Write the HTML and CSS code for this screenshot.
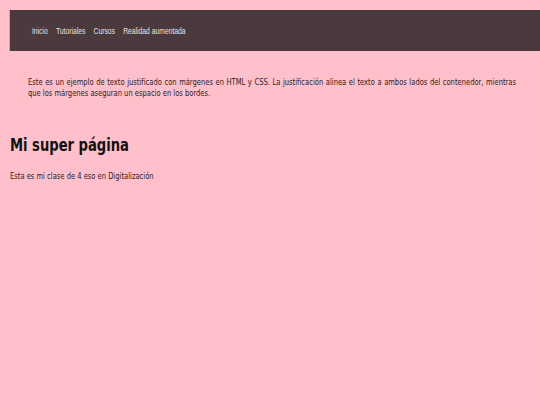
FILE: index.html
```html
<!DOCTYPE html>
<html lang="es">
<head>
<meta charset="utf-8">
<title>Mi super página</title>
<link rel="stylesheet" href="styles.css">
</head>
<body>
<div class="frame">
  <div class="page">
    <nav class="menu">
      <ul class="menu-list">
        <li><a href="#">Inicio</a></li>
        <li><a href="#">Tutoriales</a></li>
        <li><a href="#">Cursos</a></li>
        <li><a href="#">Realidad aumentada</a></li>
      </ul>
    </nav>
    <p class="intro">Este es un ejemplo de texto justificado con márgenes en HTML y CSS. La justificación alinea el texto a ambos lados del contenedor, mientras que los márgenes aseguran un espacio en los bordes.</p>
    <h1 class="title">Mi super página</h1>
    <p class="lead">Esta es mi clase de 4 eso en Digitalización</p>
  </div>
</div>
</body>
</html>
```
FILE: styles.css
```css
html, body {
  background: #ffc0cb;
}
body {
  margin: 0;
  overflow: hidden;
  font-family: "DejaVu Sans", sans-serif;
  font-size: 9px;
  color: #2a2222;
}
.frame {
  width: 100%;
  overflow: hidden;
}
.page {
  width: 720px;
  box-sizing: border-box;
  padding: 10px 0 0 13.3px;
  transform: scaleX(0.75);
  transform-origin: 0 0;
}
.menu {
  background: #4a3a3d;
  height: 41px;
  display: flex;
  align-items: center;
  padding-left: 29.3px;
}
.menu-list {
  list-style: none;
  margin: 0;
  padding: 0;
  display: flex;
  gap: 11px;
}
.menu-list a {
  font-family: "Liberation Sans", "Arial", sans-serif;
  font-size: 9px;
  color: #e6e2e2;
  text-decoration: none;
}
.intro {
  margin: 25.5px 32px 0 24px;
  text-align: justify;
  line-height: 11px;
}
.title {
  margin: 36.3px 0 0 0;
  font-size: 17.5px;
  font-weight: bold;
  color: #111;
}
.lead {
  margin: 16.4px 0 0 0;
}
```
